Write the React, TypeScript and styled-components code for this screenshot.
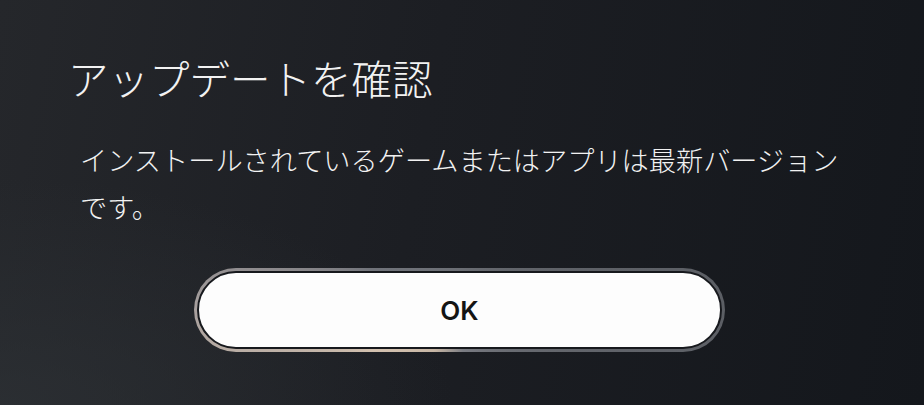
import { FC } from 'react';
import styled, { createGlobalStyle } from 'styled-components';

const GlobalStyle = createGlobalStyle`
  html, body {
    margin: 0;
    padding: 0;
    background: #16191d;
  }
  * {
    box-sizing: border-box;
  }
`;

const StyledDialog = styled.div`
  width: 924px;
  height: 405px;
  padding: 50px 0 0 68px;
  display: flex;
  flex-direction: column;
  background:
    radial-gradient(ellipse 70% 80% at 0% 100%, rgba(46, 50, 54, 0.7), rgba(46, 50, 54, 0) 70%),
    linear-gradient(100deg, #25272b 0%, #1c1e23 45%, #14171c 100%);
  font-family: "Noto Sans CJK JP", "Noto Sans", sans-serif;
  color: #f2f2f2;
  overflow: hidden;
`;

const StyledTitle = styled.h1`
  margin: 0;
  font-size: 40.5px;
  font-weight: 300;
  line-height: 56px;
`;

const StyledMessage = styled.p`
  margin: 30px 0 0 12px;
  max-width: 780px;
  font-size: 27.2px;
  font-weight: 300;
  line-height: 47px;
`;

const StyledActions = styled.div`
  margin-top: 38px;
  padding-left: 126px;
  display: flex;
`;

// Ring round the focused button: grey, warming to beige at the lower left
const StyledRing = styled.div`
  padding: 3px;
  border-radius: 999px;
  background: conic-gradient(
    #6b6e74 0deg,
    #5b5e64 90deg,
    #7a7c83 175deg,
    #c6b5a4 212deg,
    #d3c1af 245deg,
    #a49d9c 272deg,
    #70737a 295deg,
    #6b6e74 360deg
  );
`;

const StyledButton = styled.button`
  width: 525px;
  height: 78px;
  border: 2px solid #17191d;
  border-radius: 999px;
  background: #fdfdfd;
  color: #141414;
  font-family: Inter, "Noto Sans", sans-serif;
  font-size: 26px;
  font-weight: 600;
  cursor: pointer;
`;

const App: FC = () => {
  return (
    <>
      <GlobalStyle />
      <StyledDialog>
        <StyledTitle>アップデートを確認</StyledTitle>
        <StyledMessage>
          インストールされているゲームまたはアプリは最新バージョンです。
        </StyledMessage>
        <StyledActions>
          <StyledRing>
            <StyledButton>OK</StyledButton>
          </StyledRing>
        </StyledActions>
      </StyledDialog>
    </>
  );
};

export default App;
